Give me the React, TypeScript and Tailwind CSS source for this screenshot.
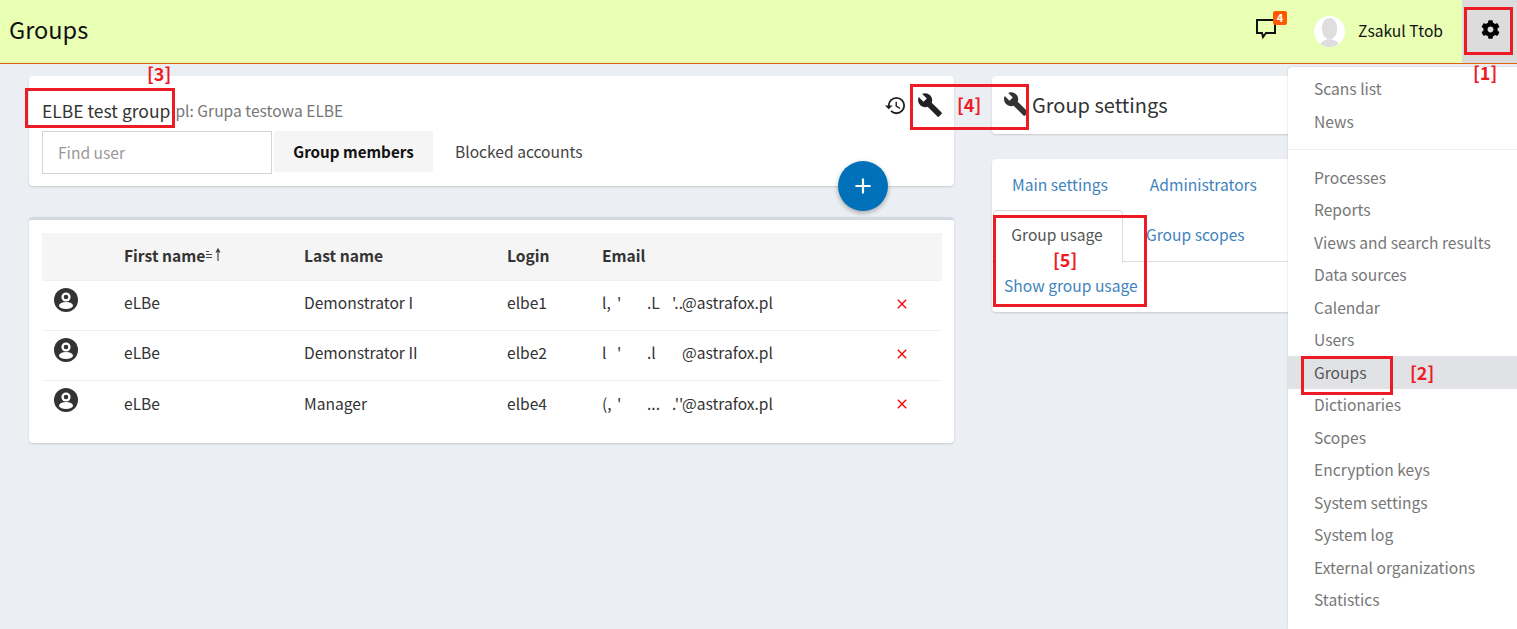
import React from "react";
import { MdBuild, MdHistory, MdAdd, MdClose } from "react-icons/md";
import { FaCog } from "react-icons/fa";

const font = { fontFamily: '"Noto Sans CJK SC", "Noto Sans", sans-serif' };

function Mark({ cls }: { cls: string }) {
  return <div className={"absolute border-[3px] border-[#ed1c24] pointer-events-none " + cls} />;
}
function Label({ cls, t }: { cls: string; t: string }) {
  return <div className={"absolute text-[18px] font-bold leading-none text-[#ed1c24] " + cls}>{t}</div>;
}
function Person() {
  return (
    <svg viewBox="0 0 24 24" className="h-[24px] w-[24px]">
      <circle cx="12" cy="12" r="12" fill="#333" />
      <circle cx="12" cy="9" r="4.6" fill="#fff" />
      <circle cx="12" cy="9" r="2.3" fill="#333" />
      <ellipse cx="12" cy="17.5" rx="7" ry="3.6" fill="#fff" />
    </svg>
  );
}

const rows = [
  { l: "Demonstrator I", login: "elbe1", e: ["l,", "'", ".L", "'.."] },
  { l: "Demonstrator II", login: "elbe2", e: ["l", "'", ".l", ""] },
  { l: "Manager", login: "elbe4", e: ["(,", "'", "...", ".''"] },
];

const menuA = ["Scans list", "News"];
const menuB = ["Processes", "Reports", "Views and search results", "Data sources", "Calendar", "Users", "Groups", "Dictionaries", "Scopes", "Encryption keys", "System settings", "System log", "External organizations", "Statistics"];

export default function App() {
  return (
    <div className="relative h-[629px] w-[1517px] overflow-hidden bg-[#ebeef2] text-[15.6px] text-[#333]" style={font}>
      <header className="flex h-[64px] items-center border-b border-[#e0620d] bg-[#e9ffb4]">
        <h1 className="ml-[9px] -mt-[3px] flex-1 text-[23.5px] text-[#111]">Groups</h1>
        <div className="relative mr-[38px] mt-[-6px] h-[20px] w-[20px]">
          <svg width="20" height="20" viewBox="0 0 20 20" fill="none" stroke="#111" strokeWidth="2" className="block">
            <path d="M1 1h18v13H10l-3 4-1-4H1z" />
          </svg>
          <span className="absolute left-[17px] -top-[8px] flex h-[14px] w-[14px] items-center justify-center rounded-[2px] bg-[#ff5a00] text-[11px] font-bold leading-none text-white">4</span>
        </div>
        <div className="mr-[13px] h-[31px] w-[31px] overflow-hidden rounded-full bg-white">
          <svg viewBox="0 0 32 32" className="h-full w-full"><ellipse cx="16" cy="13" rx="8" ry="11" fill="#dedede" /><path d="M6 32c0-6 6-8 10-8s10 2 10 8z" fill="#dedede" /></svg>
        </div>
        <span className="mb-[1px] mr-[19px] text-[#111]">Zsakul Ttob</span>
        <div className="flex h-[63px] w-[55px] items-center justify-center bg-[#dcdcdc]">
          <FaCog className="mb-[4px] ml-[1px] h-[19px] w-[19px] text-black" />
        </div>
      </header>

      <main className="flex gap-[38px] pl-[29px] pt-[12px]">
        <div className="w-[925px]">
          <section className="relative h-[110px] rounded-[4px] bg-white px-[13px] pt-[19px] shadow-[0_1px_2px_rgba(0,0,0,0.15)]">
            <div className="flex h-[36px] items-start">
              <span className="mt-[4px] text-[17.5px] leading-[24px] text-[#333]">ELBE test group</span>
              <span className="ml-[5px] mt-[3px] leading-[24px] text-[#777]">pl: Grupa testowa ELBE</span>
              <div className="ml-auto mr-[-2px] -mt-[3px] flex items-center gap-[10px]">
                <MdHistory className="h-[23px] w-[23px] text-[#222]" />
                <MdBuild className="h-[26px] w-[26px] text-[#222]" />
              </div>
            </div>
            <div className="flex items-start">
              <input readOnly placeholder="Find user" className="h-[43px] w-[230px] border border-[#d2d4dc] px-[15px] pb-[2px] text-[15.6px] outline-none placeholder:text-[#999]" />
              <button className="ml-[2px] h-[41px] w-[159px] rounded-[2px] bg-[#f5f5f5] text-[15.2px] font-bold text-[#111]">Group members</button>
              <button className="ml-[2px] h-[41px] px-[20px] text-[#444]">Blocked accounts</button>
            </div>
            <button className="absolute right-[66px] top-[85px] flex h-[50px] w-[50px] items-center justify-center rounded-full bg-[#0070b8] text-white shadow-[0_2px_5px_rgba(0,0,0,0.3)]">
              <MdAdd className="h-[26px] w-[26px]" />
            </button>
          </section>

          <section className="mt-[31px] rounded-[4px] border-t-[3px] border-[#d5d8e0] bg-white px-[13px] pb-[13px] pt-[13px] shadow-[0_1px_2px_rgba(0,0,0,0.15)]">
            <table className="w-[900px] table-fixed border-collapse">
              <colgroup>
                <col className="w-[70px]" /><col className="w-[180px]" /><col className="w-[203px]" /><col className="w-[95px]" /><col className="w-[290px]" /><col />
              </colgroup>
              <thead>
                <tr className="h-[47px] border-b border-[#f0f0f0] bg-[#f5f5f5] text-left font-bold">
                  <th className="px-[12px]"></th>
                  <th className="px-[12px] pb-[2px]">
                    <span className="inline-flex items-center">First name
                      <svg width="17" height="14" viewBox="0 0 17 14"><path d="M1 3.5h3M1 6.5h6M1 9.5h6M13 13V2M11 4.5l2-3.5 2 3.5" stroke="#444" strokeWidth="1.2" fill="none" /></svg>
                    </span>
                  </th>
                  <th className="px-[12px] pb-[2px]">Last name</th>
                  <th className="px-[12px] pb-[2px]">Login</th>
                  <th className="px-[12px] pb-[2px]">Email</th>
                  <th></th>
                </tr>
              </thead>
              <tbody>
                {rows.map((r) => (
                  <tr key={r.login} className="h-[50px] border-b border-[#f0f0f0] last:border-b-0">
                    <td className="px-[12px] align-top pt-[7px]"><Person /></td>
                    <td className="px-[12px] pb-[4px]">eLBe</td>
                    <td className="px-[12px] pb-[4px]">{r.l}</td>
                    <td className="px-[12px] pb-[4px]">{r.login}</td>
                    <td className="px-[12px] pb-[4px]">
                      <span className="inline-flex">
                        <span className="w-[15px]">{r.e[0]}</span>
                        <span className="w-[30px]">{r.e[1]}</span>
                        <span className="w-[25px]">{r.e[2]}</span>
                        <span className="w-[10px]">{r.e[3]}</span>
                        @astrafox.pl
                      </span>
                    </td>
                    <td className="pb-[3px]"><MdClose className="ml-[14px] block h-[16px] w-[16px] text-[#f00]" /></td>
                  </tr>
                ))}
              </tbody>
            </table>
          </section>
        </div>

        <div className="w-[496px]">
          <section className="flex h-[58px] items-center rounded-[4px] bg-white pl-[11px] shadow-[0_1px_2px_rgba(0,0,0,0.15)]">
            <MdBuild className="-mt-[2px] mr-[3px] h-[26px] w-[26px] text-[#333]" />
            <span className="-mt-[1px] text-[20px] text-[#333]">Group settings</span>
          </section>
          <section className="mt-[25px] h-[153px] rounded-[4px] bg-white shadow-[0_1px_2px_rgba(0,0,0,0.15)]">
            <div className="flex h-[51px] items-center text-[#3f83bd]">
              <span className="ml-[20px]">Main settings</span>
              <span className="ml-[42px]">Administrators</span>
            </div>
            <div className="flex h-[52px] border-b border-[#ddd]">
              <div className="-mb-px ml-[1px] flex h-[53px] w-[130px] items-center justify-center rounded-t-[4px] border border-b-0 border-[#ddd] bg-white pb-[4px] pr-[2px] text-[#555]">Group usage</div>
              <span className="ml-[23px] flex items-center pb-[2px] text-[#3f83bd]">Group scopes</span>
            </div>
            <div className="pl-[12px] pt-[12px] text-[#3f83bd]">Show group usage</div>
          </section>
        </div>
      </main>

      <nav className="absolute right-0 top-[67px] h-[562px] w-[229px] rounded-tl-[4px] bg-white text-[#777] shadow-[0_0_2px_rgba(0,0,0,0.2)]">
        <div className="border-b border-[#eee] pb-[11.5px] pt-[5.5px]">
          {menuA.map((m) => <div key={m} className="flex h-[32.5px] items-center pl-[26px]">{m}</div>)}
        </div>
        <div className="pt-[11px]">
          {menuB.map((m) => <div key={m} className={"flex h-[32.5px] items-center pl-[26px] " + (m === "Groups" ? "bg-[#e1e2e6] text-[#555]" : "")}>{m}</div>)}
        </div>
      </nav>

      <Mark cls="left-[1464px] top-[7px] h-[48px] w-[49px]" />
      <Mark cls="left-[1301px] top-[356px] h-[39px] w-[92px]" />
      <Mark cls="left-[25px] top-[88px] h-[40px] w-[150px]" />
      <Mark cls="left-[910px] top-[84px] h-[46px] w-[119px]" />
      <Mark cls="left-[993px] top-[215px] h-[92px] w-[154px]" />
      <Label cls="left-[1473px] top-[63px]" t="[1]" />
      <Label cls="left-[1410px] top-[363px]" t="[2]" />
      <Label cls="left-[147px] top-[64px]" t="[3]" />
      <Label cls="left-[957px] top-[95px]" t="[4]" />
      <Label cls="left-[1053px] top-[250px]" t="[5]" />
    </div>
  );
}
